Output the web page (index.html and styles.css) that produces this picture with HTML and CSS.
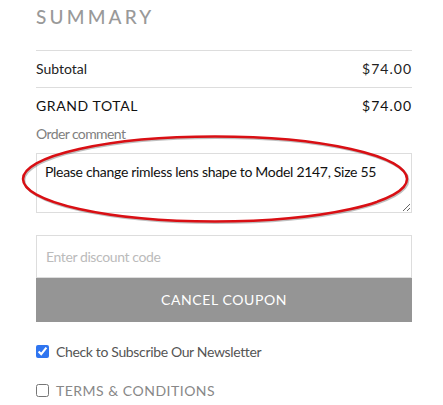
FILE: index.html
```html
<!DOCTYPE html>
<html lang="en">
<head>
    <meta charset="UTF-8">
    <meta name="viewport" content="width=device-width, initial-scale=1.0">
    <title>Summary</title>
    <link rel="stylesheet" href="styles.css">
</head>
<body>
    <section class="summary">
        <h2 class="summary-title">SUMMARY</h2>

        <div class="totals">
            <div class="total-row">
                <span>Subtotal</span>
                <span class="price">$74.00</span>
            </div>
            <div class="total-row grand">
                <span>GRAND TOTAL</span>
                <span class="price">$74.00</span>
            </div>
        </div>

        <label class="comment-label" for="orderComment">Order comment</label>
        <textarea class="comment-box" id="orderComment">Please change rimless lens shape to Model 2147, Size 55</textarea>

        <div class="discount">
            <input type="text" class="discount-input" placeholder="Enter discount code">
            <button class="discount-btn">CANCEL COUPON</button>
        </div>

        <label class="check">
            <input type="checkbox" checked>
            <span>Check to Subscribe Our Newsletter</span>
        </label>
        <label class="check terms">
            <input type="checkbox">
            <span>TERMS &amp; CONDITIONS</span>
        </label>

        <!-- red marker circle drawn over the comment box -->
        <svg class="highlight" width="390" height="92" viewBox="0 0 390 92">
            <ellipse cx="195.5" cy="44.5" rx="192" ry="42.5" fill="none" stroke="rgba(0,0,0,0.25)" stroke-width="2.5" transform="translate(0.6 0.8)"/>
            <ellipse cx="195" cy="44" rx="192" ry="42.5" fill="none" stroke="#d90f14" stroke-width="2.5"/>
        </svg>
    </section>
</body>
</html>
```

FILE: styles.css
```css
body {
    font-family: Lato, "Open Sans", sans-serif;
    background-color: #fff;
    color: #222;
    margin: 0;
    padding: 0;
}
.summary {
    position: relative;
    margin: 0 31px 0 36px;
    padding-top: 6px;
}
.summary-title {
    margin: 0 0 21px;
    font-size: 19px;
    line-height: 1.2;
    font-weight: 500;
    letter-spacing: 3.2px;
    color: #999;
}
.totals {
    border-top: 1px solid #ddd;
}
.total-row {
    display: flex;
    justify-content: space-between;
    font-size: 14px;
    line-height: 36px;
    color: #222;
}
.total-row:first-child {
    border-bottom: 1px solid #ddd;
}
.total-row.grand {
    font-size: 14px;
    letter-spacing: 0.6px;
    color: #111;
}
.price {
    letter-spacing: 1px;
}
.comment-label {
    display: block;
    font-size: 14px;
    line-height: 20px;
    letter-spacing: -0.6px;
    color: #808080;
    margin-bottom: 9px;
}
.comment-box {
    display: block;
    box-sizing: border-box;
    width: 100%;
    height: 60px;
    margin: 0;
    padding: 8px 8px;
    border: 1px solid #ddd;
    border-radius: 0;
    font-family: Lato, "Open Sans", sans-serif;
    font-size: 14px;
    line-height: 20px;
    letter-spacing: -0.3px;
    color: #111;
    resize: vertical;
}
.discount {
    margin-top: 22px;
}
.discount-input {
    display: block;
    box-sizing: border-box;
    width: 100%;
    height: 43px;
    margin: 0;
    padding: 0 9px;
    border: 1px solid #ddd;
    border-radius: 0;
    font-family: Lato, "Open Sans", sans-serif;
    font-size: 14px;
    letter-spacing: -0.4px;
    outline: none;
}
.discount-input::placeholder {
    color: #bbb;
}
.discount-btn {
    display: block;
    width: 100%;
    height: 44px;
    margin: 0;
    border: none;
    background: #959595;
    color: #fff;
    font-family: Lato, "Open Sans", sans-serif;
    font-size: 14px;
    letter-spacing: 0.6px;
    cursor: pointer;
}
.check {
    display: flex;
    align-items: center;
    gap: 7px;
    margin-top: 20px;
    font-size: 14px;
    line-height: 20px;
    letter-spacing: -0.35px;
    color: #555;
}
.check input {
    width: 13px;
    height: 13px;
    margin: 0;
    accent-color: #2f75f0;
}
.check.terms {
    margin-top: 19px;
    font-size: 14px;
    letter-spacing: 0.5px;
    color: #888;
}
.highlight {
    position: absolute;
    left: -16px;
    top: 135px;
    pointer-events: none;
}
```
